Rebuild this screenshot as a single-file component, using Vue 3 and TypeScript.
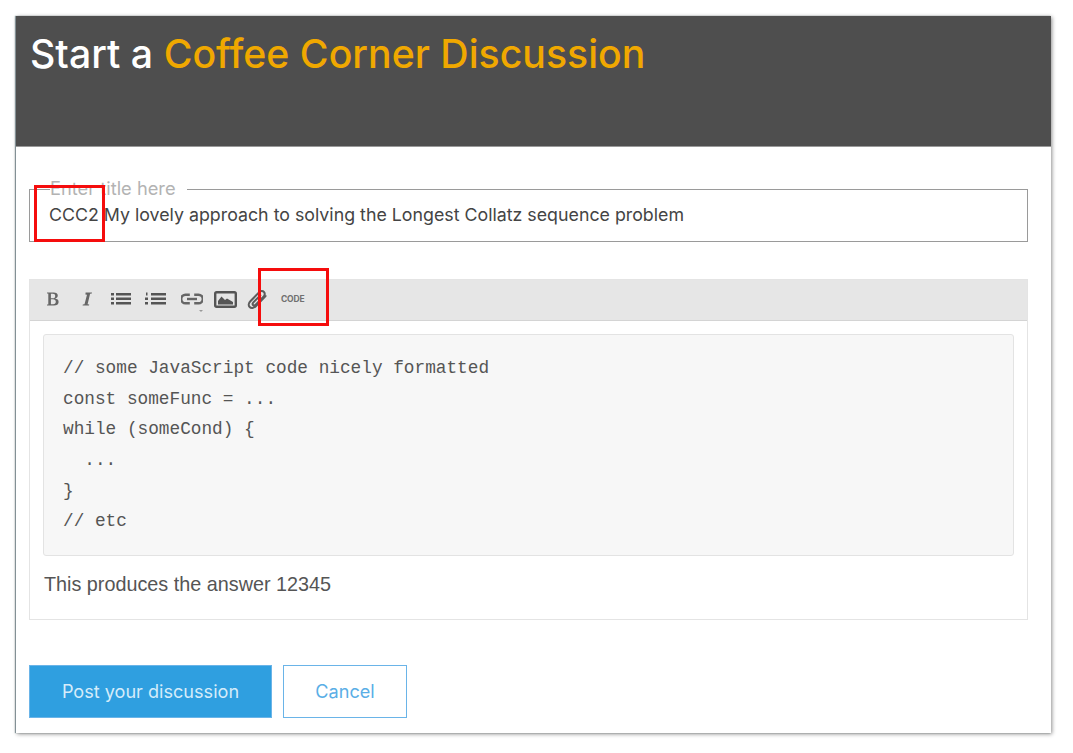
<script setup lang="ts">
const codeLines: string[] = [
  '// some JavaScript code nicely formatted',
  'const someFunc = ...',
  'while (someCond) {',
  '  ...',
  '}',
  '// etc',
]
</script>

<template>
  <div class="page">
    <div class="card">
      <header class="head">
        <h1 class="title">Start a <span class="accent">Coffee Corner Discussion</span></h1>
      </header>
      <main class="body">
        <fieldset class="field">
          <legend class="legend">Enter title here</legend>
          <div class="value">CCC2 My lovely approach to solving the Longest Collatz sequence problem</div>
        </fieldset>
        <div class="mark mark-a"></div>

        <section class="editor">
          <div class="toolbar">
            <svg class="ico i-b" width="14" height="16" viewBox="0 0 14 16">
              <path fill="#666" fill-rule="evenodd" d="M1 1.5h6.6c2.6 0 4.2 1.2 4.2 3.100 0 1.500-1 2.600-2.700 3 2.200.3 3.500 1.500 3.500 3.300 0 2.200-1.800 3.600-4.600 3.600H1v-.9l1.300-.2V2.600L1 2.400zM4.900 2.700v4.500h1.900c1.600 0 2.400-.8 2.400-2.300 0-1.500-.8-2.200-2.400-2.200zM4.900 8.300v5h2.300c1.700 0 2.600-.9 2.600-2.500s-1-2.500-2.800-2.500z"/>
            </svg>
            <svg class="ico i-i" width="12" height="16" viewBox="0 0 12 16">
              <path fill="#666" d="M4.600 1.500h6.400l-.2 1-1.700.3-2.500 10.400 1.600.3-.2 1H1.600l.2-1 1.700-.3L6 3.800l-1.600-.3z"/>
            </svg>
            <svg class="ico i-ul" width="20" height="14" viewBox="0 0 20 14">
              <g fill="#555">
                <rect x="0" y="1" width="3" height="2.500"/><rect x="0" y="5.500" width="3" height="2.500"/><rect x="0" y="10" width="3" height="2.500"/>
                <rect x="5" y="1" width="15" height="2.500"/><rect x="5" y="5.500" width="15" height="2.500"/><rect x="5" y="10" width="15" height="2.500"/>
              </g>
            </svg>
            <svg class="ico i-ol" width="21" height="14" viewBox="0 0 21 14">
              <g fill="#555">
                <rect x="1" y="0.500" width="1.500" height="3"/><rect x="0" y="5.500" width="3" height="2.500"/><rect x="0" y="10" width="3" height="2.500"/>
                <rect x="6" y="1" width="15" height="2.500"/><rect x="6" y="5.500" width="15" height="2.500"/><rect x="6" y="10" width="15" height="2.500"/>
              </g>
            </svg>
            <span class="link-wrap">
              <svg class="ico" width="22" height="12" viewBox="0 0 22 12">
                <g fill="none" stroke="#666" stroke-width="2.400">
                  <path d="M8.800 1.700H4.500a4.300 4.300 0 0 0 0 8.600h4.300"/>
                  <path d="M13.200 1.700h4.300a4.300 4.300 0 0 1 0 8.600h-4.300"/>
                  <path d="M6 6h10"/>
                </g>
              </svg>
              <span class="caret"></span>
            </span>
            <svg class="ico i-img" width="23" height="17" viewBox="0 0 23 17">
              <rect x="1.200" y="1.200" width="20.600" height="14.600" rx="1.500" fill="none" stroke="#555" stroke-width="2.400"/>
              <path fill="#555" d="M4 13.500V10l3.500-4.500 3.500 3.500 2-1.500 6 3.500v2.500z"/>
            </svg>
            <svg class="ico i-clip" width="23" height="23" viewBox="0 0 20 20">
              <path fill="none" stroke="#5c5c5c" stroke-width="1.800" stroke-linecap="round" stroke-linejoin="round" d="M17 7 8.500 15.800c-1.700 1.700-4 2.100-5.300.8-1.300-1.300-.9-3.600.8-5.300L11.300 3.800c1.200-1.200 3.200-1.500 4.300-.4 1.100 1.100.8 3.100-.4 4.300L8.400 14.500c-.7.700-1.700.9-2.300.3s-.4-1.600.3-2.300l6.100-6.100"/>
            </svg>
            <span class="code-btn">CODE</span>
          </div>
          <div class="content">
            <pre class="code"><code class="mono"><span v-for="(line, i) in codeLines" :key="i" class="line">{{ line }}</span></code></pre>
            <p class="para">This produces the answer 12345</p>
          </div>
        </section>
        <div class="mark mark-b"></div>

        <div class="actions">
          <div class="btn primary">Post your discussion</div>
          <div class="btn ghost">Cancel</div>
        </div>
      </main>
    </div>
  </div>
</template>

<style>
html, body { background: #fff; }
</style>

<style scoped>
.page {
  width: 1073px;
  height: 753px;
  padding: 16px 22px 20px 16px;
  box-sizing: border-box;
  overflow: hidden;
  font-family: Inter, Roboto, "Liberation Sans", sans-serif;
}
.card {
  position: relative;
  height: 717px;
  background: #fff;
  box-shadow: 1px 1px 4px rgba(0, 0, 0, 0.45), -1px 0 1px rgba(40, 70, 80, 0.5);
}
.head {
  height: 131px;
  box-sizing: border-box;
  background: #4e4e4e;
  padding: 14px 14px 0;
  border-bottom: 1px solid #999;
}
.title {
  margin: 0;
  font-size: 39.250px;
  line-height: 48px;
  font-weight: 500;
  color: #fff;
}
.accent { color: #f0a800; }
.body { padding: 0 23px 0 13px; }
.field {
  margin: 31px 0 0;
  padding: 0 19px 0 19px;
  height: 64px;
  box-sizing: border-box;
  border: 1px solid #9a9a9a;
  min-width: 0;
}
.legend {
  margin-left: 1px;
  padding: 0 11px 2px 0;
  font-size: 18.300px;
  line-height: 20px;
  color: #b3b3b3;
}
.value {
  font-size: 17.800px;
  line-height: 24px;
  margin-top: 3px;
  color: #444;
  white-space: nowrap;
}
.mark {
  position: absolute;
  border: 3px solid #f50d0d;
  box-sizing: border-box;
}
.mark-a { left: 18px; top: 169px; width: 71px; height: 57px; }
.mark-b { left: 242px; top: 252px; width: 71px; height: 58px; }
.editor {
  margin-top: 37px;
  border: 1px solid #e4e4e4;
  height: 341px;
  box-sizing: border-box;
}
.toolbar {
  height: 41px;
  box-sizing: border-box;
  background: #e6e6e6;
  border-bottom: 1px solid #d4d4d4;
  display: flex;
  align-items: center;
  padding-left: 16px;
  padding-bottom: 2px;
}
.ico { display: block; flex: none; }
.i-i { margin-left: 21px; }
.i-ul { margin-left: 18px; }
.i-ol { margin-left: 14px; }
.link-wrap { position: relative; margin-left: 15px; display: block; }
.caret {
  position: absolute;
  left: 18px;
  top: 17px;
  border: 2px solid transparent;
  border-top: 2px solid #999;
}
.i-img { margin-left: 11px; }
.i-clip { margin-left: 9px; }
.code-btn {
  margin-left: 12px;
  font-size: 8.500px;
  font-weight: 700;
  color: #707070;
  letter-spacing: -0.2px;
}
.content { padding: 13px 13px 0; }
.code {
  margin: 0;
  height: 222px;
  box-sizing: border-box;
  padding: 18px 19px;
  background: #f7f7f7;
  border: 1px solid #e3e3e3;
  border-radius: 3px;
  color: #555;
}
.mono {
  font-family: "Liberation Mono", monospace;
  font-size: 17.750px;
  line-height: 30.700px;
}
.line { display: block; white-space: pre; height: 30.700px; }
.para {
  margin: 16px 0 0 1px;
  font-family: "Liberation Sans", sans-serif;
  font-size: 19.800px;
  line-height: 24px;
  color: #555;
}
.actions {
  display: flex;
  gap: 11px;
  margin-top: 45px;
}
.btn {
  height: 53px;
  box-sizing: border-box;
  font-size: 18.100px;
  line-height: 51px;
  text-align: center;
  border: 1px solid #6ab4e8;
  flex: none;
}
.primary { width: 243px; background: #2f9fe0; color: #d5ecfa; }
.ghost { width: 124px; background: #fff; color: #5aaee6; }
</style>
